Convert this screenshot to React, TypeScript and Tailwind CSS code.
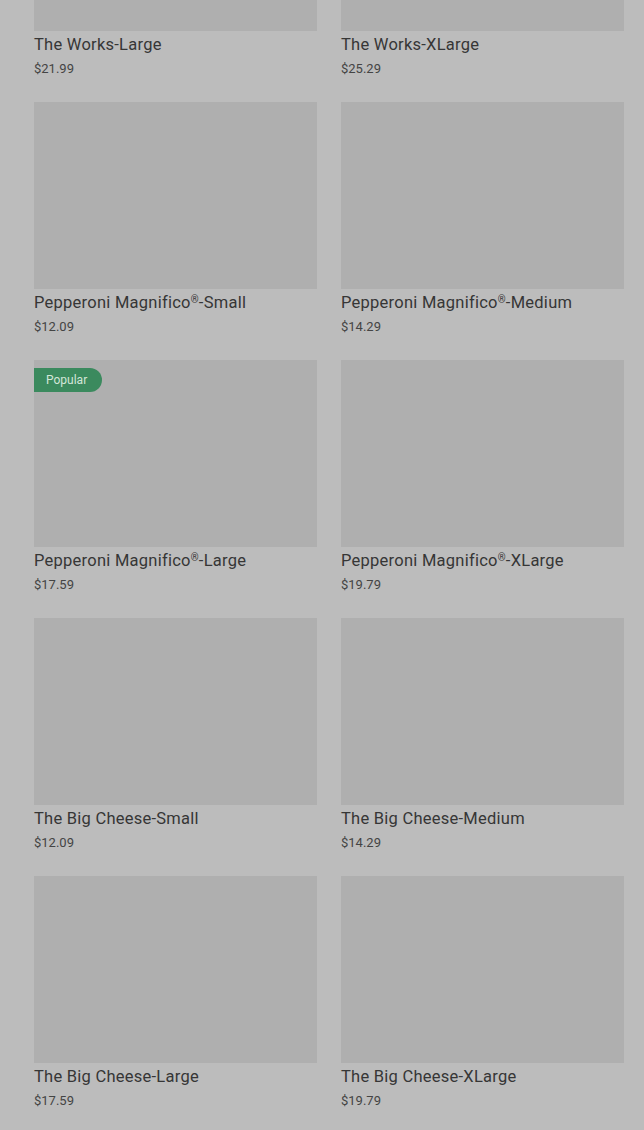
import React from "react";

type Item = { name: string; price: string; popular?: boolean };

const items: Item[] = [
  { name: "The Works-Large", price: "$21.99" },
  { name: "The Works-XLarge", price: "$25.29" },
  { name: "Pepperoni Magnifico®-Small", price: "$12.09" },
  { name: "Pepperoni Magnifico®-Medium", price: "$14.29" },
  { name: "Pepperoni Magnifico®-Large", price: "$17.59", popular: true },
  { name: "Pepperoni Magnifico®-XLarge", price: "$19.79" },
  { name: "The Big Cheese-Small", price: "$12.09" },
  { name: "The Big Cheese-Medium", price: "$14.29" },
  { name: "The Big Cheese-Large", price: "$17.59" },
  { name: "The Big Cheese-XLarge", price: "$19.79" },
];

// the registered mark sits small and raised in the design
function Name({ text }: { text: string }) {
  const parts = text.split("®");
  if (parts.length === 1) return <>{text}</>;
  return (
    <>
      {parts[0]}
      <span className="relative -top-[5px] text-[10px] leading-none">®</span>
      {parts[1]}
    </>
  );
}

function ProductCard({ item }: { item: Item }) {
  return (
    <div className="flex flex-col">
      <div className="relative h-[187px] bg-[#afafaf]">
        {item.popular && (
          <span className="absolute left-0 top-2 flex h-6 items-center rounded-r-full bg-[#3b8a5e] pl-3 pr-[15px] text-xs text-[#d3e6d9]">
            Popular
          </span>
        )}
      </div>
      <div className="mt-[2px] h-6 text-[16.5px] leading-6 tracking-[0.25px] text-[#363636]">
        <Name text={item.name} />
      </div>
      <div className="mt-[2px] text-[13px] leading-5 text-[#444444]">{item.price}</div>
    </div>
  );
}

export default function App() {
  return (
    <div
      className="h-[1130px] overflow-hidden bg-[#bcbcbc]"
      style={{ fontFamily: "Roboto, 'Liberation Sans', sans-serif" }}
    >
      <div className="-mt-[156px] grid grid-cols-2 gap-x-6 gap-y-[23px] pl-[34px] pr-5">
        {items.map((it) => (
          <ProductCard key={it.name} item={it} />
        ))}
      </div>
    </div>
  );
}
